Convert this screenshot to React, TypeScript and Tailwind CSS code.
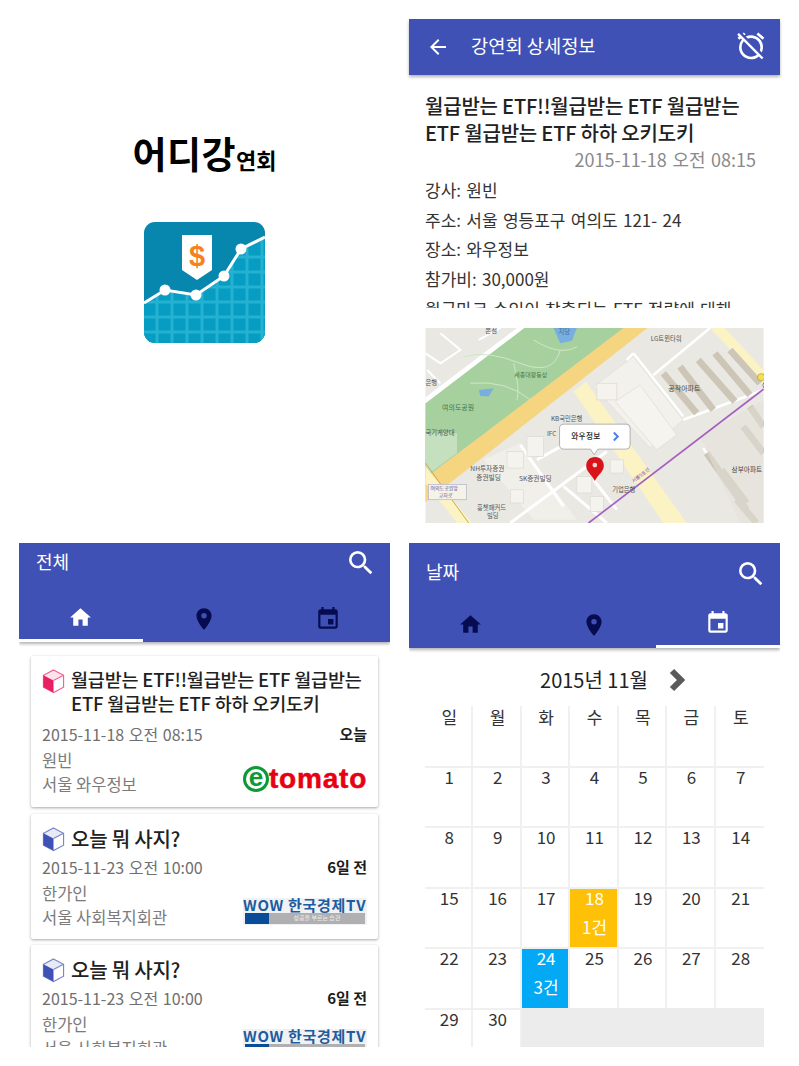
import React from "react";
import { MdAlarmOff, MdArrowBack, MdEvent, MdHome, MdPlace, MdSearch } from "react-icons/md";

const FONT = "font-['Noto_Sans_CJK_KR','Noto_Sans',sans-serif]";

const AppIcon = () => {
  const columns = [8, 23, 38, 53, 68, 83, 98, 113];
  const rows = [35, 50, 65, 80, 95, 110];
  return (
    <svg viewBox="0 0 121 121" className="h-[121px] w-[121px]">
      <defs>
        <clipPath id="round">
          <rect width="121" height="121" rx="11" />
        </clipPath>
        <clipPath id="under">
          <path d="M0 81 L21 68 L52 73 L80 54 L97 27 L121 15 V121 H0 Z" />
        </clipPath>
      </defs>
      <g clipPath="url(#round)">
        <rect width="121" height="121" fill="#0787ad" />
        <path d="M0 81 L21 68 L52 73 L80 54 L97 27 L121 15 V121 H0 Z" fill="#079cc1" />
        <g clipPath="url(#under)" stroke="#25b2d2" strokeWidth="3">
          {columns.map((v) => (
            <path key={v} d={`M${v + 5} 0 V121`} />
          ))}
          {rows.map((v) => (
            <path key={v} d={`M0 ${v} H121`} />
          ))}
        </g>
        <path d="M0 81 L21 68 L52 73 L80 54 L97 27 L121 15" fill="none" stroke="#fff" strokeWidth="3" />
        <circle cx="21" cy="68" r="5.5" fill="#fff" />
        <circle cx="52" cy="73" r="5.5" fill="#fff" />
        <circle cx="80" cy="54" r="5.5" fill="#fff" />
        <circle cx="97" cy="27" r="5.5" fill="#fff" />
        <path d="M38 13 H68 V48 L53 58 L38 48 Z" fill="#fff" />
        <text x="53" y="44" textAnchor="middle" fontSize="29" fontWeight="700" fill="#f5821f" fontFamily="Liberation Sans, sans-serif">$</text>
      </g>
    </svg>
  );
};

const Cube = ({ color, light }: { color: string; light: string }) => (
  <svg viewBox="0 0 24 26" className="h-[26px] w-[23px] shrink-0">
    <path d="M12 1.5 L22.5 7 V19.5 L12 25 L1.5 19.5 V7 Z" fill="#fff" stroke={light} strokeWidth="1.2" />
    <path d="M1.5 7 L12 12.5 V25 L1.5 19.5 Z" fill={color} />
    <path d="M1.5 7 L12 1.5 L22.5 7 L12 12.5 Z" fill={color} opacity="0.12" />
    <path d="M12 12.5 L22.5 7" stroke={light} strokeWidth="1.2" />
  </svg>
);

const Etomato = () => (
  <div className="flex h-[26px] w-[124px] items-center">
    <div className="flex h-[26px] w-[26px] shrink-0 items-center justify-center rounded-full border-[3px] border-[#0b9a35] font-['Liberation_Sans',sans-serif] text-[26px] font-bold leading-none text-[#0b9a35]">
      <span className="-mt-[5px]">e</span>
    </div>
    <span className="font-['Liberation_Sans',sans-serif] text-[28px] font-bold leading-none tracking-[0.8px] text-[#e60012] [-webkit-text-stroke:0.5px_#e60012]">tomato</span>
  </div>
);

const WowTv = () => (
  <div className="flex h-[27px] w-[124px] flex-col bg-[#f0f1f3]">
    <div className="whitespace-nowrap text-[15px] font-bold leading-[14px] tracking-[0.7px] text-[#1d5c9e]">WOW 한국경제TV</div>
    <div className="mx-[2px] mt-[1px] flex h-[11px]">
      <div className="h-full w-[24px] bg-[#0a4c97]" />
      <div className="flex h-full flex-1 items-center justify-center bg-[#b0b0b2] text-[6px] leading-none text-[#eee]">성공을 부르는 습관</div>
    </div>
  </div>
);

interface CardProps {
  title: React.ReactNode;
  date: string;
  when: string;
  speaker: string;
  place: string;
  color: string;
  light: string;
  logo: React.ReactNode;
  twoLines?: boolean;
}

const LectureCard = ({ title, date, when, speaker, place, color, light, logo, twoLines }: CardProps) => (
  <div className={`shrink-0 rounded-[2px] bg-white px-[11px] pt-[12px] shadow-[0_1px_3px_rgba(0,0,0,0.35)] ${twoLines ? "pb-[11px]" : "pb-[10px]"}`}>
    <div className="flex gap-[6px]">
      <Cube color={color} light={light} />
      <div className={`font-medium tracking-[-0.2px] whitespace-nowrap text-[#212121] ${twoLines ? "text-[18.5px] leading-[23.5px]" : "text-[20px] leading-[26px]"}`}>{title}</div>
    </div>
    <div className={`flex items-center justify-between ${twoLines ? "mt-[7px]" : "mt-[3px]"}`}>
      <span className="text-[16px] leading-[24px] text-[#6f6f6f] [word-spacing:1px]">{date}</span>
      <span className="text-[15px] font-bold leading-[24px] text-[#1c1c1c]">{when}</span>
    </div>
    <div className="flex items-end justify-between">
      <div className="text-[16.5px] leading-[24px] text-[#7b7b7b]">
        <div className="mt-[2px]">{speaker}</div>
        <div>{place}</div>
      </div>
      <div className="mb-[4px]">{logo}</div>
    </div>
  </div>
);

const ListPanel = () => (
  <div className="flex h-[504px] flex-col overflow-hidden bg-white">
    <div className="relative z-10 flex h-[99px] flex-col bg-[#3f51b5] shadow-[0_2px_3px_rgba(0,0,0,0.3)]">
      <div className="flex h-[56px] items-start justify-between pl-[17px] pr-[13px] pt-[4px] text-[18px] text-white">
        <span className="mt-[-1px] leading-[30px]">전체</span>
        <MdSearch className="text-[32px] text-white" />
      </div>
      <div className="grid flex-1 grid-cols-3">
        <div className="flex items-center justify-center border-b-[3px] border-white pb-[4px]"><MdHome className="text-[25px] text-white" /></div>
        <div className="flex items-center justify-center pb-[4px]"><MdPlace className="text-[26px] text-[#070c50]" /></div>
        <div className="flex items-center justify-center pb-[4px]"><MdEvent className="text-[26px] text-[#070c50]" /></div>
      </div>
    </div>
    <div className="flex min-h-0 flex-1 flex-col gap-[6.5px] overflow-hidden px-[12px] pt-[14px]">
      <LectureCard
        twoLines
        title={<>월급받는 ETF!!월급받는 ETF 월급받는<br />ETF 월급받는 ETF 하하 오키도키</>}
        date="2015-11-18 오전 08:15"
        when="오늘"
        speaker="원빈"
        place="서울 와우정보"
        color="#e91e63"
        light="#f06292"
        logo={<Etomato />}
      />
      <LectureCard
        title="오늘 뭐 사지?"
        date="2015-11-23 오전 10:00"
        when="6일 전"
        speaker="한가인"
        place="서울 사회복지회관"
        color="#3f51b5"
        light="#7986cb"
        logo={<WowTv />}
      />
      <LectureCard
        title="오늘 뭐 사지?"
        date="2015-11-23 오전 10:00"
        when="6일 전"
        speaker="한가인"
        place="서울 사회복지회관"
        color="#3f51b5"
        light="#7986cb"
        logo={<WowTv />}
      />
    </div>
  </div>
);

const MapLabel = ({ x, y, children, size = 19, fill = "#555" }: { x: number; y: number; children: string; size?: number; fill?: string }) => (
  <text x={x} y={y} fontSize={size} fill={fill} fontFamily="Noto Sans CJK KR, sans-serif">{children}</text>
);

// map drawn in the coordinates of a 3x crop, so the viewBox starts at 15,24
const MapView = () => (
  <svg viewBox="15 24 1016 586" className="h-[195px] w-[339px]">
    <rect x="15" y="24" width="1016" height="586" fill="#e9e8e3" />
    <path d="M15 250 L310 24 H620 L15 475 Z" fill="#a6d19e" />
    <path d="M15 475 L610 24 H682 L15 548 Z" fill="#f6d581" />
    <path d="M15 232 L290 24 H312 L15 250 Z" fill="#fff" />
    <path d="M60 40 L120 90 L60 130 L15 100 M175 60 L240 24 M20 150 L60 190" fill="none" stroke="#fff" strokeWidth="6" />
    <path d="M130 110 Q200 90 300 130 T420 90 M150 190 Q260 180 330 240 M280 130 Q300 210 290 240 M340 60 Q420 110 470 80" fill="none" stroke="#cfe6c8" strokeWidth="3" />
    <path d="M400 24 H470 L455 62 L420 70 Z" fill="#78aee0" />
    <path d="M175 210 L220 205 L205 230 L180 228 Z" fill="#78aee0" />
    <path d="M15 340 H110 V400 L15 470 Z" fill="#c4e0be" />
    <path d="M460 215 L497 185 L800 610 H730 Z" fill="#fbf3c4" />
    <path d="M870 24 H915 L1031 150 V195 Z" fill="#fbf3c4" />
    <path d="M15 440 L155 610 H110 L15 490 Z" fill="#fbf3c4" />
    <path d="M15 430 L145 610" stroke="#c9a94f" strokeWidth="3" />
    <path d="M520 200 L640 110 L790 300 L690 385 Z" fill="#f2f1ec" stroke="#dedcd5" strokeWidth="2" />
    <path d="M585 245 L660 195 L770 345 L710 390 Z" fill="#f5f4ef" stroke="#dddbd4" strokeWidth="2" />
    <path d="M640 100 L790 290 M700 165 L870 24 M790 300 L1031 210 M850 385 L1000 610 M640 100 L620 120" stroke="#fff" strokeWidth="8" fill="none" />
    <g stroke="#cdc5b6" strokeWidth="20">
      <path d="M730 160 L830 280 M780 140 L880 270 M835 120 L945 245 M885 100 L990 225 M930 90 L1020 190" />
      <path d="M860 400 L980 570 M905 450 L980 550 M970 320 L1031 400 M990 260 L1031 320 M950 540 L1010 610" />
    </g>
    <path d="M840 350 L1031 240 V610 H960 Z" fill="#e4e0d9" opacity="0.55" />
    <path d="M190 420 L300 370 L470 600 H340 Z" fill="#f0efe9" />
    <path d="M270 610 L560 395 M300 375 L430 560 M430 500 L560 610 M520 480 L590 570 M350 420 L440 370" stroke="#fff" strokeWidth="9" fill="none" />
    <g fill="#f4f3ee" stroke="#dbd9d2" strokeWidth="2">
      <rect x="320" y="350" width="50" height="60" />
      <rect x="260" y="395" width="50" height="50" />
      <rect x="470" y="470" width="45" height="50" />
      <rect x="510" y="530" width="40" height="45" />
      <rect x="570" y="420" width="40" height="40" />
      <rect x="270" y="510" width="40" height="40" />
      <rect x="530" y="190" width="60" height="50" />
    </g>
    <path d="M505 610 L1031 208" stroke="#a45fc2" strokeWidth="5" />
    <circle cx="1024" cy="172" r="11" fill="#f4e04d" stroke="#555" strokeWidth="1" />
    <circle cx="1040" cy="196" r="11" fill="#fff" stroke="#a45fc2" strokeWidth="3" />
    <MapLabel x={195} y={40}>본점</MapLabel>
    <MapLabel x={415} y={42} fill="#3f6f9e">지당</MapLabel>
    <MapLabel x={692} y={62}>LG트윈타워</MapLabel>
    <MapLabel x={282} y={172} fill="#43784a" size={18}>세종대왕동상</MapLabel>
    <MapLabel x={65} y={271} fill="#43784a" size={21}>여의도공원</MapLabel>
    <MapLabel x={15} y={196}>은행</MapLabel>
    <MapLabel x={15} y={346}>국기게양대</MapLabel>
    <MapLabel x={745} y={214} fill="#444" size={21}>공작아파트</MapLabel>
    <MapLabel x={392} y={305}>KB국민은행</MapLabel>
    <MapLabel x={380} y={350}>IFC</MapLabel>
    <MapLabel x={150} y={454} size={20}>NH투자증권</MapLabel>
    <MapLabel x={168} y={480} size={20}>증권빌딩</MapLabel>
    <MapLabel x={296} y={485} size={20}>SK증권빌딩</MapLabel>
    <MapLabel x={576} y={516}>기업은행</MapLabel>
    <MapLabel x={170} y={570}>흥쳇패커드</MapLabel>
    <MapLabel x={200} y={594}>빌딩</MapLabel>
    <MapLabel x={935} y={458} fill="#444" size={20}>삼부아파트</MapLabel>
    <rect x="24" y="494" width="114" height="46" fill="#f5f2e8" stroke="#b3aed0" strokeWidth="2" />
    <MapLabel x={30} y={512} size={15} fill="#5a5a9a">여의도공원앞</MapLabel>
    <MapLabel x={55} y={533} size={15} fill="#5a5a9a">교차로</MapLabel>
    <text x="640" y="490" fontSize="15" fill="#8a4fb0" fontFamily="Noto Sans CJK KR, sans-serif" transform="rotate(-37 640 490)">서울5호선</text>
    <path d="M432 313 H618 Q630 313 630 325 V376 Q630 388 618 388 H533 L522 405 L511 388 H432 Q418 388 418 376 V325 Q418 313 432 313 Z" fill="#fff" stroke="#8f8f8f" strokeWidth="2" />
    <text x="453" y="359" fontSize="23" fontWeight="500" fill="#222" letterSpacing="1" fontFamily="Noto Sans CJK KR, sans-serif">와우정보</text>
    <path d="M581 338 L593 350 L581 362" fill="none" stroke="#4d80e8" strokeWidth="6" />
    <path d="M525 412 C507 412 498 425 498 438 C498 455 515 465 524 484 C533 465 551 455 551 438 C551 425 542 412 525 412 Z" fill="#d8141a" />
    <circle cx="524" cy="436" r="7" fill="#f7d8d4" />
  </svg>
);

const DetailPanel = () => (
  <div className="flex h-[504px] flex-col bg-white">
    <div className="relative z-10 flex h-[56px] shrink-0 items-center bg-[#3f51b5] pl-[17px] pr-[13px] text-white shadow-[0_2px_3px_rgba(0,0,0,0.3)]">
      <MdArrowBack className="text-[24px]" />
      <span className="ml-[21px] mt-[-4px] flex-1 text-[18.7px]">강연회 상세정보</span>
      <MdAlarmOff className="mt-[-2px] text-[32px]" />
    </div>
    <div className="mx-[16px] mt-[18px] h-[215px] shrink-0 overflow-hidden">
      <div className="text-[20px] font-medium leading-[26.5px] tracking-[-0.2px] text-[#212121]">
        월급받는 ETF!!월급받는 ETF 월급받는<br />ETF 월급받는 ETF 하하 오키도키
      </div>
      <div className="mr-[8px] text-right text-[18px] leading-[27px] text-[#8a8a8a] [word-spacing:1.5px]">2015-11-18 오전 08:15</div>
      <div className="mt-[2px] text-[17px] leading-[29.7px] text-[#333] [word-spacing:1.5px]">
        <div>강사: 원빈</div>
        <div>주소: 서울 영등포구 여의도 121- 24</div>
        <div>장소: 와우정보</div>
        <div>참가비: 30,000원</div>
        <div>월급마크 수익이 창출되는 ETF 전략에 대해</div>
      </div>
    </div>
    <div className="mx-[16px] mt-[20px]">
      <MapView />
    </div>
  </div>
);

const CALENDAR: (string | null)[] = [
  ...Array.from({ length: 30 }, (_, i) => String(i + 1)),
  null, null, null, null, null,
];

const CalendarPanel = () => (
  <div className="flex h-[504px] flex-col overflow-hidden bg-white">
    <div className="relative z-10 flex h-[105px] shrink-0 flex-col bg-[#3f51b5] shadow-[0_2px_3px_rgba(0,0,0,0.3)]">
      <div className="flex h-[62px] items-center justify-between pl-[17px] pr-[13px] text-[18px] text-white">
        <span className="mt-[-5px]">날짜</span>
        <MdSearch className="text-[32px] text-white" />
      </div>
      <div className="grid flex-1 grid-cols-3">
        <div className="flex items-center justify-center pb-[4px]"><MdHome className="text-[25px] text-[#070c50]" /></div>
        <div className="flex items-center justify-center pb-[4px]"><MdPlace className="text-[26px] text-[#070c50]" /></div>
        <div className="flex items-center justify-center border-b-[3px] border-white pb-[4px]"><MdEvent className="text-[26px] text-white" /></div>
      </div>
    </div>
    <div className="flex h-[58px] shrink-0 items-center justify-center pl-[36px] pt-[6px]">
      <span className="text-[20px] text-[#222]">2015년 11월</span>
      <svg viewBox="0 0 16 24" className="ml-[21px] h-[24px] w-[16px]">
        <path d="M3 3 L12 12 L3 21" fill="none" stroke="#5a5a5a" strokeWidth="6" />
      </svg>
    </div>
    <div className="mx-[16px] grid grid-cols-7 text-center text-[17px] text-[#333]">
      {["일", "월", "화", "수", "목", "금", "토"].map((d, i) => (
        <div key={d} className={`h-[59.5px] pl-[2px] leading-[22px] ${i < 6 ? "border-r-2 border-[#f0f0f0]" : ""}`}>{d}</div>
      ))}
      {CALENDAR.map((d, i) => {
        if (d === null) return <div key={i} className="h-[60.5px] bg-[#ececec]" />;
        const hot = d === "18" ? "bg-[#ffc107] text-white" : d === "24" ? "bg-[#03a9f4] text-white" : "";
        return (
          <div
            key={i}
            className={`h-[60.5px] border-t-2 border-[#f0f0f0] pl-[2px] leading-[27px] ${(i + 1) % 7 !== 0 ? "border-r-2" : ""} ${hot}`}
          >
            <div className="-mt-[5px]">{d}</div>
            {d === "18" && <div className="mt-[2px]">1건</div>}
            {d === "24" && <div className="mt-[2px]">3건</div>}
          </div>
        );
      })}
    </div>
  </div>
);

const SplashPanel = () => (
  <div className="flex h-[504px] flex-col items-center bg-white">
    <div className="mt-[102px] flex items-baseline font-bold leading-[64px] text-black">
      <span className="text-[37px] tracking-[0.5px]">어디강</span>
      <span className="text-[22px]">연회</span>
    </div>
    <div className="mt-[37px] -translate-y-[6px]">
      <AppIcon />
    </div>
  </div>
);

export default function App() {
  return (
    <div className={`grid h-[1066px] w-[799px] grid-cols-[371px_371px] grid-rows-[504px_504px] gap-x-[19px] gap-y-[20px] bg-white p-[19px] ${FONT}`}>
      <SplashPanel />
      <DetailPanel />
      <ListPanel />
      <CalendarPanel />
    </div>
  );
}
